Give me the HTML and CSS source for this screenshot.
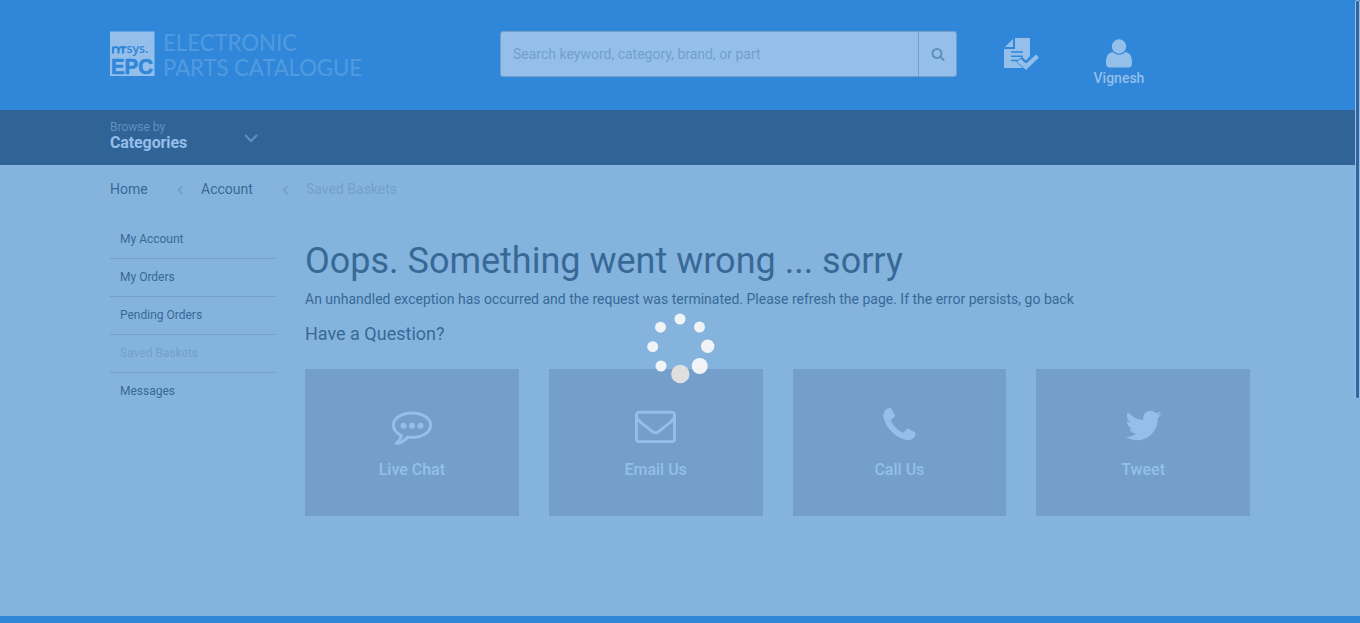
FILE: index.html
```html
<!DOCTYPE html>
<html lang="en">
<head>
<meta charset="utf-8">
<title>Electronic Parts Catalogue</title>
<link rel="stylesheet" href="styles.css">
</head>
<body>
<div class="page">
  <header class="header">
    <svg class="logo" width="254" height="46" viewBox="0 0 254 46">
      <rect class="logo-box" y=".5" width="44.500" height="44.500"/>
      <path class="logo-mark" d="M3 22.500v-7M3 18q1-2 3-2t2.500 3v3.500M8.500 19q1-3 3-3h1.500v6.500M13 18q.5-2 3.500-2"/>
      <text class="logo-sys" x="16.500" y="21.500" textLength="22" lengthAdjust="spacingAndGlyphs">sys.</text>
      <text class="logo-epc" x="1" y="42.500" textLength="42" lengthAdjust="spacingAndGlyphs">EPC</text>
      <text class="logo-name" x="53" y="20" textLength="134" lengthAdjust="spacingAndGlyphs">ELECTRONIC</text>
      <text class="logo-name" x="53" y="45" textLength="199" lengthAdjust="spacingAndGlyphs">PARTS CATALOGUE</text>
    </svg>
    <div class="search">
      <span class="search-input">Search keyword, category, brand, or part</span>
      <span class="search-button"><svg width="14" height="14" viewBox="0 0 1792 1792"><path d="M1216 832q0-185-131.5-316.5t-316.5-131.5-316.5 131.5-131.5 316.5 131.5 316.5 316.5 131.5 316.5-131.5 131.5-316.5zm512 832q0 52-38 90t-90 38q-54 0-90-38l-343-342q-179 124-399 124-143 0-273.5-55.5t-225-150-150-225-55.5-273.5 55.5-273.5 150-225 225-150 273.5-55.5 273.5 55.5 225 150 150 225 55.5 273.5q0 220-124 399l343 343q37 37 37 90z"/></svg></span>
    </div>
    <svg class="orders" width="36" height="34" viewBox="0 0 36 34">
      <path class="fill" d="M11 0h15v18l-4 4.500-4-3.500-5 4 6 7H0V11h11zM9 1v8H1z"/>
      <path class="doc-lines" d="M7 14h12M7 18.300h12M7 22.500h8"/>
      <path class="doc-gap" d="M14 24l2.500-2.500 5.500 5L32 17.500l2 2L22 31z"/>
      <path class="fill" d="M14 24l2.500-2.500 5.500 5L32 17.500l2 2L22 31z"/>
    </svg>
    <div class="user">
      <svg width="26" height="29" viewBox="0 0 26 29"><circle cx="13" cy="7.500" r="7.200"/><path d="M6.500 13Q13 18.600 19.500 13Q26 14 26 23V24.500Q26 28.500 22 28.500H4Q0 28.500 0 24.500V23Q0 14 6.500 13z"/></svg>
      <span>Vignesh</span>
    </div>
  </header>
  <nav class="nav">
    <div class="browse"><span class="browse-by">Browse by</span><span class="browse-title">Categories</span></div>
    <svg width="14" height="9" viewBox="0 0 14 9"><path d="M1 1l6 6 6-6"/></svg>
  </nav>
  <div class="crumbs">
    <span class="crumb-home">Home</span>
    <svg width="7" height="10" viewBox="0 0 7 10"><path d="M5.500 1l-4 4 4 4"/></svg>
    <span class="crumb-account">Account</span>
    <svg width="7" height="10" viewBox="0 0 7 10"><path d="M5.500 1l-4 4 4 4"/></svg>
    <span class="crumb-current">Saved Baskets</span>
  </div>
  <div class="content">
    <ul class="menu">
      <li>My Account</li>
      <li>My Orders</li>
      <li>Pending Orders</li>
      <li class="current">Saved Baskets</li>
      <li>Messages</li>
    </ul>
    <main class="main">
      <h1>Oops. Something went wrong ... sorry</h1>
      <p>An unhandled exception has occurred and the request was terminated. Please refresh the page. If the error persists, go back</p>
      <h2>Have a Question?</h2>
      <div class="tiles">
        <div class="tile">
          <svg width="41" height="41" viewBox="0 0 41 41"><path class="bubble" d="M21 7.900C11 7.900 2.400 13 2.400 20.200c0 4.500 3.300 8 8.100 10.300-.8 3.300-2.300 5.600-5.300 7.900 5-.5 9-3 11.500-6.400 1.500.3 2.800.4 4.300.4 10 0 18.600-5 18.600-12.200S31 7.900 21 7.900z"/><circle cx="12.500" cy="20.800" r="3"/><circle cx="21" cy="20.800" r="3"/><circle cx="29.500" cy="20.800" r="3"/></svg>
          <span>Live Chat</span>
        </div>
        <div class="tile">
          <svg width="41" height="41" viewBox="0 0 1792 1792"><path d="M1664 1504v-768q-32 36-69 66-268 206-426 338-51 43-83 67t-86.500 48.500-102.500 24.500h-2q-48 0-102.500-24.500t-86.500-48.500-83-67q-158-132-426-338-37-30-69-66v768q0 13 9.500 22.500t22.500 9.500h1472q13 0 22.500-9.500t9.500-22.500zm0-1051v-24.500l-.5-13-3-12.500-5.500-9-9-7.500-14-2.500h-1472q-13 0-22.500 9.500t-9.500 22.500q0 168 147 284 193 152 401 317 6 5 35 29.500t46 37.500 44.500 31.500 50.500 27.500 43 9h2q20 0 43-9t50.500-27.500 44.500-31.500 46-37.500 35-29.500q208-165 401-317 54-43 100.500-115.500t46.500-131.500zm128-37v1088q0 66-47 113t-113 47h-1472q-66 0-113-47t-47-113v-1088q0-66 47-113t113-47h1472q66 0 113 47t47 113z"/></svg>
          <span>Email Us</span>
        </div>
        <div class="tile">
          <svg width="41" height="41" viewBox="0 0 1792 1792"><path d="M1600 1240q0 27-10 70.500t-21 68.500q-21 50-122 106-94 51-186 51-27 0-53-3.500t-57.500-12.500-47-14.500-55.500-20.500-49-18q-98-35-175-83-127-79-264-216t-216-264q-48-77-83-175-3-9-18-49t-20.500-55.500-14.500-47-12.500-57.500-3.500-53q0-92 51-186 56-101 106-122 25-11 68.500-21t70.500-10q14 0 21 3 18 6 53 76 11 19 30 54t35 63.500 31 53.500q3 4 17.500 25t21.500 35.500 7 28.500q0 20-28.500 50t-62 55-62 53-28.500 46q0 9 5 22.500t8.500 20.500 14 24 11.500 19q76 137 174 235t235 174q2 1 19 11.500t24 14 20.500 8.500 22.500 5q18 0 46-28.500t53-62 55-62 50-28.500q14 0 28.500 7t35.500 21.500 25 17.500q25 15 53.500 31t63.500 35 54 30q70 35 76 53 3 7 3 21z"/></svg>
          <span>Call Us</span>
        </div>
        <div class="tile">
          <svg width="41" height="41" viewBox="0 0 1792 1792"><path d="M1684 408q-67 98-162 167 1 14 1 42 0 130-38 259.500t-115.500 248.500-184.500 210.500-258 146-323 54.500q-271 0-496-145 35 4 78 4 225 0 401-138-105-2-188-64.500t-114-159.500q33 5 61 5 43 0 85-11-112-23-185.500-111.500t-73.500-205.500v-4q68 38 146 41-66-44-105-115t-39-154q0-88 44-163 121 149 294.500 238.500t371.500 99.500q-8-38-8-74 0-134 94.500-228.500t228.500-94.500q140 0 236 102 109-21 205-78-37 115-142 178 93-10 186-50z"/></svg>
          <span>Tweet</span>
        </div>
      </div>
    </main>
  </div>
  <footer class="footer"></footer>
  <svg class="spinner" width="70" height="72" viewBox="0 0 70 72">
    <circle cx="35" cy="8" r="5.500"/><circle cx="54.500" cy="16" r="5.500"/><circle cx="62.700" cy="35.300" r="6.700"/><circle cx="54.700" cy="55" r="8"/><circle class="spinner-gray" cx="35.300" cy="63" r="9.200"/><circle cx="16" cy="55" r="5.500"/><circle cx="7.700" cy="35.700" r="5.500"/><circle cx="15.500" cy="16.200" r="5.500"/>
  </svg>
  <div class="scroll-thumb"></div>
</div>
</body>
</html>
```
FILE: styles.css
```css
* { box-sizing: border-box; }
body {
  margin: 0;
  overflow: hidden;
  background: #84b4de;
  color: #386996;
  font: 14px/20px Roboto, "Liberation Sans", sans-serif;
}
svg { display: block; flex: none; overflow: visible; }
.page { position: relative; height: 623px; display: flex; flex-direction: column; }
.header {
  height: 110px;
  padding: 31px 0 0 110px;
  display: flex;
  align-items: flex-start;
  background: #3086d8;
}
.logo-box { fill: #93bfea; }
.logo-mark { fill: none; stroke: #3086d8; stroke-width: 2.2; }
.logo-sys { font: 600 12.5px "Open Sans", sans-serif; fill: #3086d8; }
.logo-epc { font: bold 22px "Liberation Sans", sans-serif; fill: #3086d8; stroke: #3086d8; stroke-width: .7; }
.logo-name { font: 24px Lato, sans-serif; fill: #4f9ae0; stroke: #4f9ae0; stroke-width: .2; }
.search {
  width: 457px;
  height: 46px;
  margin-left: 136px;
  display: flex;
  border: 1px solid #739fca;
  border-radius: 3px;
  background: #93bfea;
}
.search-input { flex: 1; padding: 12px; color: #739fca; }
.search-button {
  width: 38px;
  padding: 0 0 1px;
  display: flex;
  align-items: center;
  justify-content: center;
  border-left: 1px solid #739fca;
}
.search-button svg { fill: #608fbd; }
.orders { margin: 7px 0 0 47px; }
.fill { fill: #93bfea; fill-rule: evenodd; }
.doc-lines { stroke: #3086d8; stroke-width: 1.6; }
.doc-gap { fill: #3086d8; stroke: #3086d8; stroke-width: 2.5; }
.orders .doc-gap + .fill { stroke: #93bfea; stroke-width: 1.4; stroke-linejoin: round; }
.user {
  width: 60px;
  margin: 8px 0 0 49px;
  display: flex;
  flex-direction: column;
  align-items: center;
  color: #93bfea;
  font-weight: 500;
}
.user svg { fill: #93bfea; }
.nav { height: 55px; padding-left: 110px; display: flex; background: #306497; }
.nav svg { margin-top: 24px; fill: none; stroke: #608fbd; stroke-width: 2; }
.browse { width: 134px; padding-top: 9px; display: flex; flex-direction: column; line-height: 16px; }
.browse-by { font-size: 12px; color: #608fbd; }
.browse-title { font-size: 16px; font-weight: bold; letter-spacing: -.12px; color: #93bfea; }
.crumbs { height: 48px; padding-left: 110px; display: flex; align-items: center; }
.crumbs svg { margin-top: 1px; fill: none; stroke: #739fca; stroke-width: 1.8; }
.crumb-home { width: 67px; }
.crumb-account { width: 81px; margin-left: 17px; }
.crumb-current { margin-left: 17px; color: #739fca; }
.content { flex: 1; padding: 7px 110px 0; display: flex; gap: 30px; }
.menu { width: 165px; margin: 0; padding: 0; list-style: none; font-size: 12px; }
.menu li { height: 38px; padding: 9px 10px; line-height: 20px; }
.menu li + li { border-top: 1px solid #739fca; padding-top: 8px; }
.menu .current { color: #739fca; }
.main { flex: 1; }
h1 { margin: 21px 0 0; font-size: 36px; line-height: 40px; font-weight: normal; white-space: nowrap; }
p { margin: 8px 0 0; }
h2 { margin: 15px 0 0; font-size: 18px; line-height: 20px; font-weight: normal; }
.tiles { margin-top: 25px; display: grid; grid-template-columns: repeat(4, 1fr); gap: 30px; }
.tile {
  height: 147px;
  padding-top: 36px;
  display: flex;
  flex-direction: column;
  align-items: center;
  gap: 14px;
  background: #739fca;
  color: #93bfea;
  font-size: 16px;
  font-weight: 500;
}
.tile svg { fill: #93bfea; }
.tile .bubble { fill: none; stroke: #93bfea; stroke-width: 3; stroke-linejoin: round; }
.footer { height: 7px; background: #3086d8; }
.spinner { position: absolute; left: 645px; top: 311px; fill: #f0f4f6; }
.spinner-gray { fill: #dfdfe0; }
.scroll-thumb {
  position: absolute;
  top: 0;
  right: 0;
  width: 5px;
  height: 399px;
  border: 1px solid #93bfea;
  border-radius: 2px;
  background: #34659a;
}
```
